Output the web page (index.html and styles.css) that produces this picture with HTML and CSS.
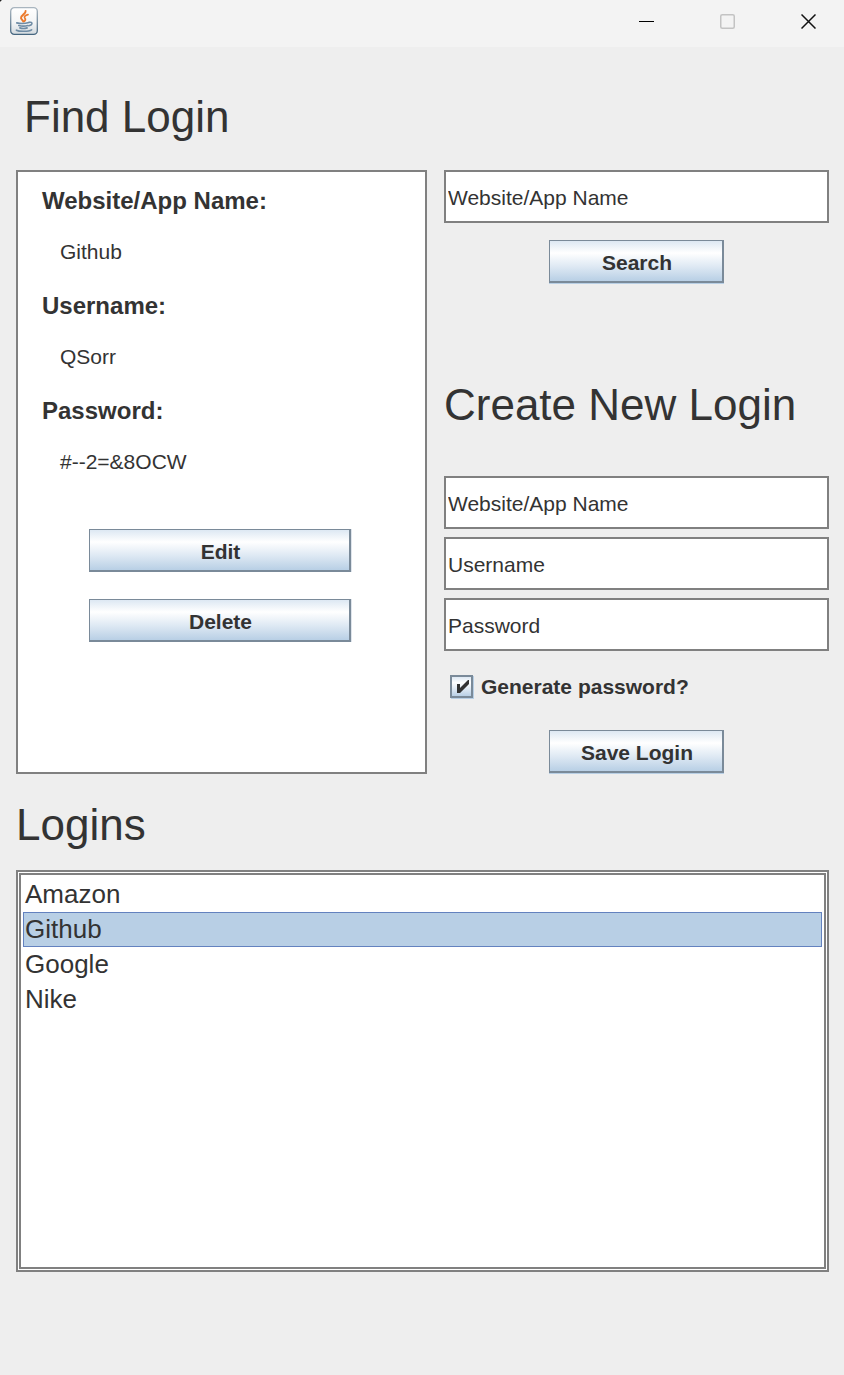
FILE: index.html
```html
<!DOCTYPE html>
<html lang="en">
<head>
<meta charset="utf-8">
<meta name="viewport" content="width=device-width, initial-scale=1">
<title>Logins</title>
<link rel="stylesheet" href="styles.css">
</head>
<body>
<header class="titlebar">
  <svg class="app-icon" viewBox="0 0 28 28" aria-hidden="true">
    <defs>
      <linearGradient id="tile" x1="0" y1="0" x2="0" y2="1">
        <stop offset="0" stop-color="#ffffff"/>
        <stop offset=".55" stop-color="#f4f5f6"/>
        <stop offset="1" stop-color="#d3dadf"/>
      </linearGradient>
      <linearGradient id="edge" x1="0" y1="0" x2="0" y2="1">
        <stop offset="0" stop-color="#a9b5bf"/>
        <stop offset="1" stop-color="#456680"/>
      </linearGradient>
    </defs>
    <rect x=".7" y=".7" width="26.6" height="26.6" rx="3.6" fill="url(#tile)" stroke="url(#edge)" stroke-width="1.3"/>
    <g fill="none" stroke-linecap="round">
      <path d="M15.600 4c.6 3-5.200 4.200-4.600 7.100.3 1.300 1.700 2 2.300 3.400" stroke="#ec7a2c" stroke-width="2"/>
      <path d="M18 7.600c-2.800.8-4.400 2.200-3.100 3.700.9 1.200.4 2.200-.6 3" stroke="#ec7a2c" stroke-width="1.700"/>
      <path d="M6.800 15.900c3.500.8 8.500.7 12.200-.4" stroke="#6f8ca5" stroke-width="1.700"/>
      <path d="M8.800 18.500c2.500.7 6.800.6 9.200 0M9.900 20.900c2 .7 5.200.6 7.200 0" stroke="#6f8ca5" stroke-width="1.700"/>
      <path d="M19.200 15.300c3.900-.9 3.600 2.600-.3 3.500" stroke="#6f8ca5" stroke-width="1.500"/>
      <path d="M6.400 23.200c2.600 1.500 12.300 1.500 15.200-.4" stroke="#6f8ca5" stroke-width="1.600"/>
    </g>
  </svg>
  <div class="window-controls">
    <button class="window-button" type="button" aria-label="Minimize"><svg viewBox="0 0 15 15"><path d="M0 7.500h15" stroke="#000"/></svg></button>
    <button class="window-button" type="button" aria-label="Maximize" disabled><svg viewBox="0 0 15 15"><rect x=".75" y=".75" width="13.500" height="13.500" rx="1.500" fill="none" stroke="#c3c3c3" stroke-width="1.500"/></svg></button>
    <button class="window-button" type="button" aria-label="Close"><svg viewBox="0 0 15 15"><path d="M.5.5l14 14M14.500.5l-14 14" stroke="#111" stroke-width="1.500"/></svg></button>
  </div>
</header>
<main class="content">
  <h1 class="heading find-heading">Find Login</h1>
  <div class="columns">
    <section class="details">
      <dl class="fields">
        <dt>Website/App Name:</dt>
        <dd>Github</dd>
        <dt>Username:</dt>
        <dd>QSorr</dd>
        <dt>Password:</dt>
        <dd>#--2=&amp;8OCW</dd>
      </dl>
      <div class="actions">
        <button class="button" type="button">Edit</button>
        <button class="button" type="button">Delete</button>
      </div>
    </section>
    <div class="forms">
      <form class="search-form">
        <input class="text-field" type="text" aria-label="Website/App Name to find" value="Website/App Name">
        <button class="button compact" type="button">Search</button>
      </form>
      <form class="create-form">
        <h2 class="heading">Create New Login</h2>
        <div class="inputs">
          <input class="text-field" type="text" aria-label="Website/App Name" value="Website/App Name">
          <input class="text-field" type="text" aria-label="Username" value="Username">
          <input class="text-field" type="text" aria-label="Password" value="Password">
        </div>
        <div class="check-row">
          <input class="checkbox" type="checkbox" id="generate" checked>
          <label for="generate">Generate password?</label>
        </div>
        <button class="button compact" type="button">Save Login</button>
      </form>
    </div>
  </div>
  <h2 class="heading logins-heading" id="logins">Logins</h2>
  <ul class="list" role="listbox" tabindex="0" aria-labelledby="logins">
    <li class="item" role="option" aria-selected="false">Amazon</li>
    <li class="item" role="option" aria-selected="true">Github</li>
    <li class="item" role="option" aria-selected="false">Google</li>
    <li class="item" role="option" aria-selected="false">Nike</li>
  </ul>
</main>
</body>
</html>
```

FILE: styles.css
```css
:root {
  --ink: #333;
  --line: #808080;
  --edge: #7a8a99;
  --glow: #b8cfe5;
  --sheen: linear-gradient(#dde8f3 0%, #fff 30%, #dde8f3 65%, #b8cfe5 100%);
}

* {
  box-sizing: border-box;
}

body {
  margin: 0;
  min-height: 100vh;
  background: #eee;
  color: var(--ink);
  font-family: "Liberation Sans", Arial, sans-serif;
  font-size: 21px;
  line-height: 24px;
}

.titlebar {
  display: flex;
  align-items: flex-start;
  justify-content: space-between;
  height: 47px;
  padding: 7px 28px 0 10px;
  background: radial-gradient(circle at 0 0, #222 1px, transparent 2px) #f3f3f3;
}

.app-icon {
  width: 28px;
  height: 28px;
}

.window-controls {
  display: flex;
  gap: 66px;
  padding-top: 7px;
}

.window-button {
  width: 15px;
  height: 15px;
  padding: 0;
  border: 0;
  background: none;
}

.window-button svg {
  display: block;
}

.content {
  padding: 44px 15px 24px 16px;
}

.heading {
  margin: 0;
  font-size: 44px;
  font-weight: 400;
  line-height: 52px;
}

.find-heading {
  padding-left: 8px;
}

.columns {
  display: grid;
  grid-template-columns: 411fr 385fr;
  gap: 17px;
  margin-top: 27px;
}

.details {
  padding: 15px 24px;
  border: 2px solid var(--line);
  background: #fff;
}

.fields {
  margin: 0;
}

.fields dt {
  font-size: 24px;
  font-weight: 700;
  line-height: 28px;
}

.fields dd {
  margin: 25px 0 28px 18px;
}

.actions {
  display: grid;
  gap: 27px;
  margin: 55px 50px 0 47px;
}

.button {
  height: 43px;
  padding: 4px 0 0 2px;
  border: solid var(--edge);
  border-width: 1px 2px 2px 1px;
  border-radius: 0;
  background: var(--sheen);
  color: var(--ink);
  font: inherit;
  font-weight: 700;
}

.details .button {
  box-shadow: 1px 0 #dfe5ec;
}

.compact {
  align-self: center;
  width: 175px;
  box-shadow: 0 1px var(--glow);
}

.forms {
  padding-bottom: 1px;
}

.search-form,
.create-form {
  display: flex;
  flex-direction: column;
}

.search-form {
  gap: 17px;
}

.create-form {
  margin-top: 96px;
}

.text-field {
  width: 100%;
  height: 53px;
  padding: 3px 2px 0;
  border: 2px solid var(--line);
  border-radius: 0;
  background: #fff;
  color: var(--ink);
  font: inherit;
}

.inputs {
  display: grid;
  gap: 8px;
  margin-top: 45px;
}

.check-row {
  display: flex;
  gap: 8px;
  margin: 24px 0 31px;
  padding-left: 6px;
  font-weight: 700;
}

.checkbox {
  appearance: none;
  width: 23px;
  height: 23px;
  margin: 0;
  border: 2px solid var(--edge);
  background: var(--sheen);
  box-shadow: 1px 1px var(--glow);
}

.checkbox:checked::before {
  content: "";
  display: block;
  height: 19px;
  background: var(--ink);
  clip-path: polygon(5px 7px, 8px 7px, 8px 11px, 16px 3px, 17px 3px, 17px 7px, 8px 16px, 5px 16px);
}

.logins-heading {
  margin-top: 25px;
}

.list {
  min-height: 402px;
  margin: 19px 0 0;
  padding: 2px;
  border: 5px double var(--line);
  background: #fff;
  list-style: none;
}

.item {
  padding: 0 1px;
  border: 1px solid transparent;
  font-size: 26px;
  line-height: 33px;
}

.item[aria-selected="true"] {
  border-color: #6382bf;
  background: #b8cfe5;
}
```
